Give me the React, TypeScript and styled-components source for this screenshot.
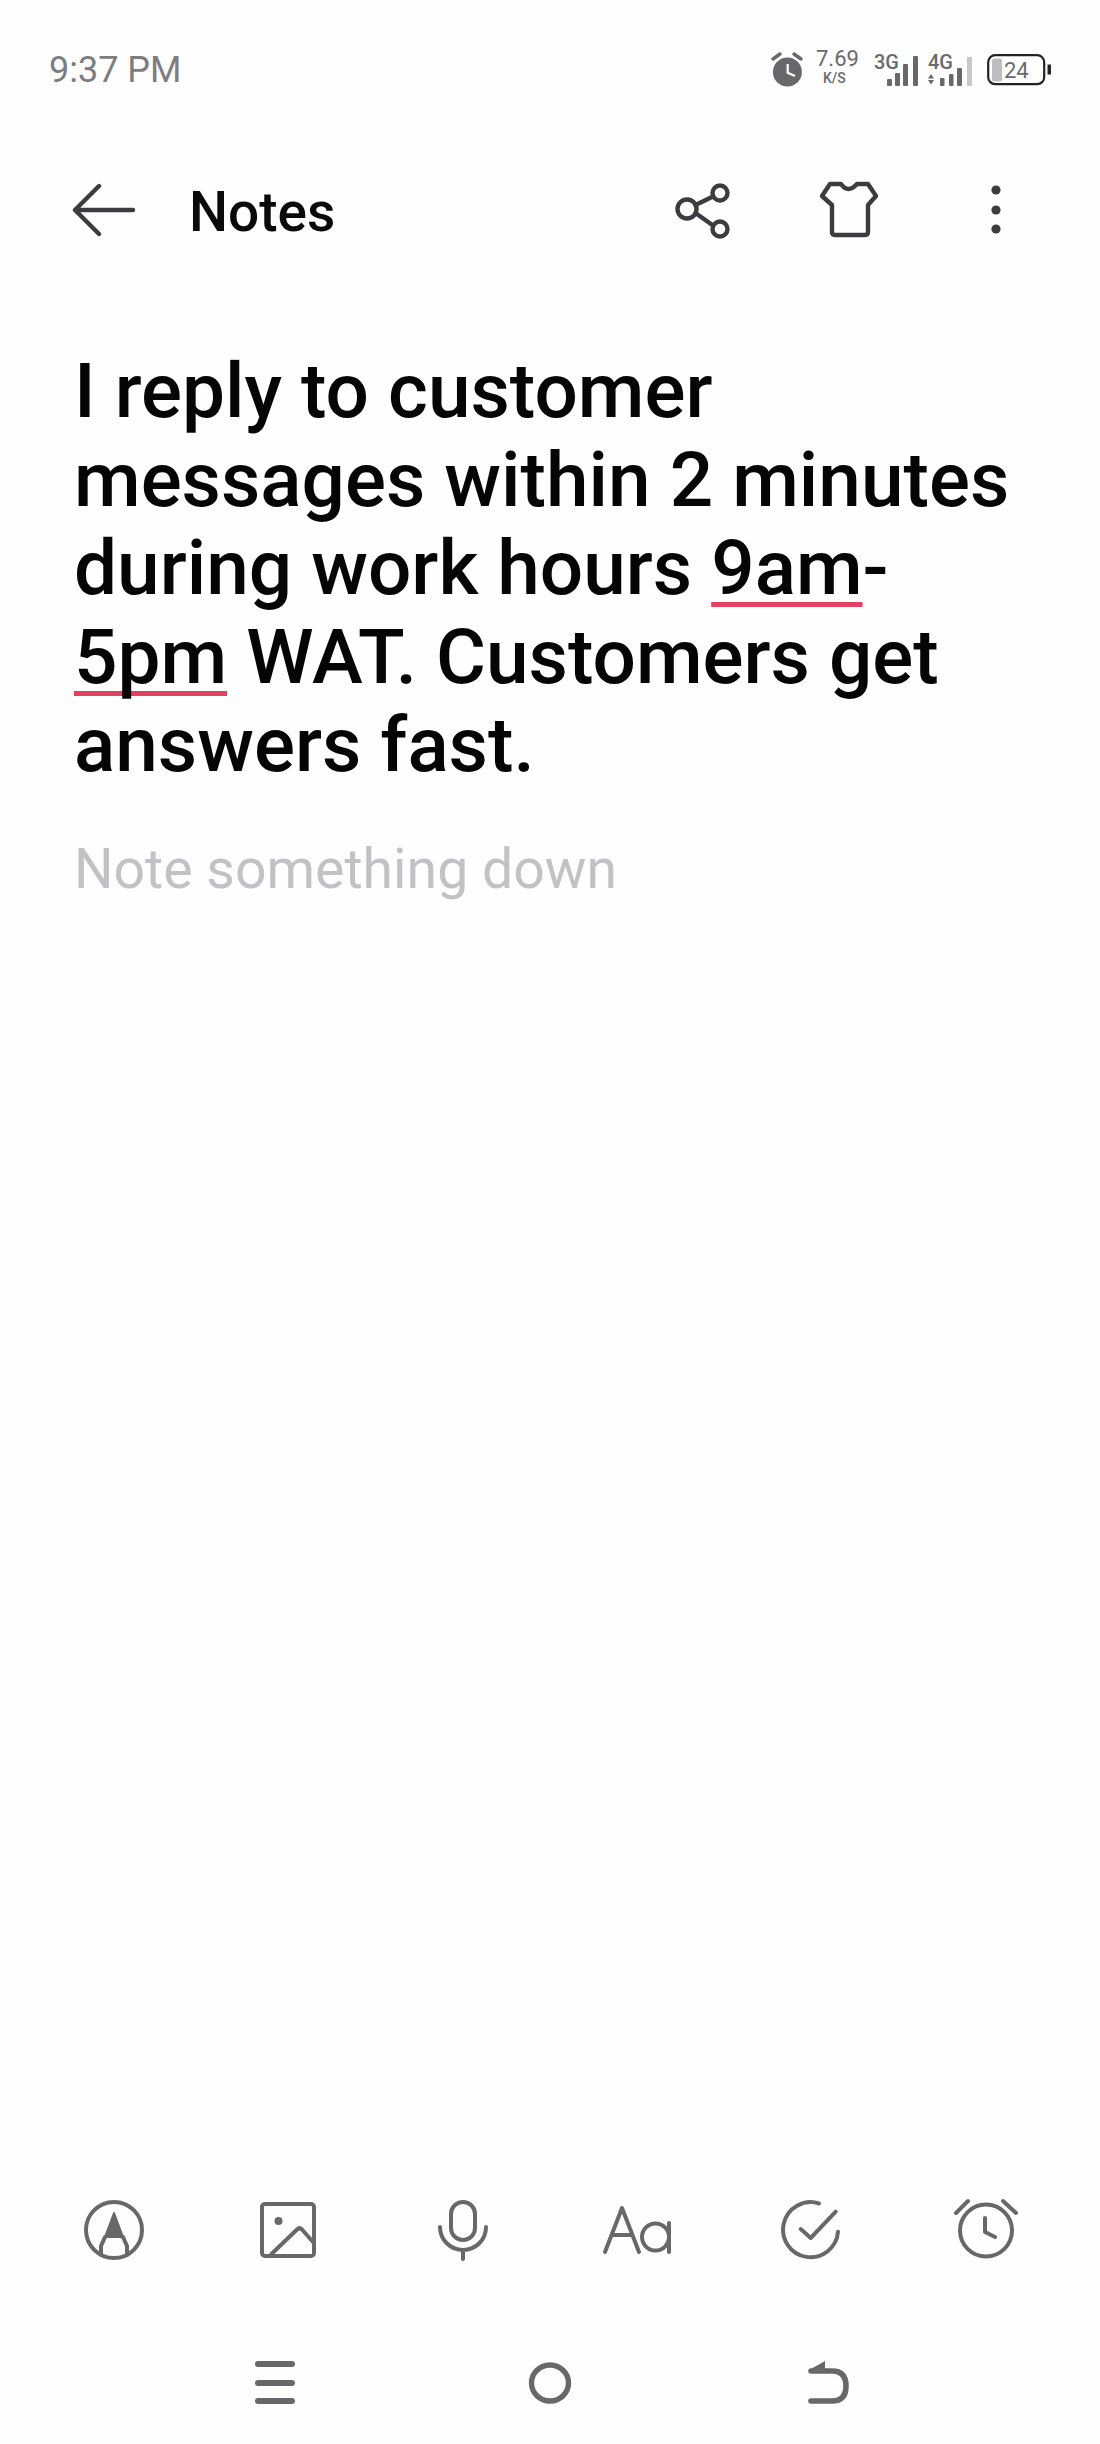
import React from "react";
import styled, { createGlobalStyle } from "styled-components";

const GlobalStyle = createGlobalStyle`
  html, body {
    margin: 0;
    padding: 0;
    background: #fffeff;
  }
  * {
    box-sizing: border-box;
  }
`;

const Screen = styled.div`
  width: 1100px;
  height: 2444px;
  display: flex;
  flex-direction: column;
  background: #fffeff;
  font-family: Roboto, "Liberation Sans", sans-serif;
  overflow: hidden;
`;

const StatusBar = styled.div`
  height: 100px;
  padding: 39px 48px 0 49px;
  display: flex;
  justify-content: space-between;
  align-items: center;
`;

const Clock = styled.div`
  font-size: 36px;
  color: #7d7d7f;
`;

const StatusIcons = styled.div`
  display: flex;
  align-items: center;
`;

const Header = styled.div`
  height: 116px;
  margin-top: 52px;
  display: flex;
  align-items: center;
`;

const BackButton = styled.div`
  width: 189px;
  padding-left: 71px;
  display: flex;
`;

const Title = styled.div`
  flex: 1;
  margin-top: 3px;
  font-size: 55px;
  font-weight: 500;
  color: #0a0a0a;
`;

const HeaderActions = styled.div`
  width: 470px;
  padding-right: 32px;
  display: grid;
  grid-template-columns: repeat(3, 146px);
  justify-items: center;
  align-items: center;
`;

const Editor = styled.div`
  flex: 1;
  padding: 0 70px 0 74px;
`;

const NoteText = styled.div`
  margin-top: 79px;
  font-size: 76.5px;
  line-height: 88.5px;
  font-weight: 500;
  color: #050505;
`;

const Misspelled = styled.span`
  text-decoration: underline #e4405f 5px;
  text-underline-offset: 8px;
  text-decoration-skip-ink: none;
`;

const Placeholder = styled.div`
  margin-top: 50px;
  font-size: 55.4px;
  line-height: 60px;
  color: #c2c2c6;
`;

const Toolbar = styled.div`
  padding: 0 27px;
  display: grid;
  grid-template-columns: repeat(6, 1fr);
  justify-items: center;
  align-items: center;
`;

const NavBar = styled.div`
  margin-top: 99px;
  height: 83px;
  padding: 0 137px;
  display: grid;
  grid-template-columns: repeat(3, 1fr);
  justify-items: center;
  align-items: flex-start;
`;

const Icon = styled.svg`
  display: block;
  flex: none;
`;

const Stroke = styled.g`
  fill: none;
  stroke: #68686a;
  stroke-width: 4;
  stroke-linecap: round;
  stroke-linejoin: round;
`;

const DarkStroke = styled(Stroke)`
  stroke: #3c3c40;
  stroke-width: 4.4;
`;

const TinyText = styled.text`
  font-family: Roboto, "Liberation Sans", sans-serif;
  fill: #6a6a6c;
`;

function StatusGlyphs() {
  return (
    <Icon width={217} height={50} viewBox="0 0 217 50">
      {/* alarm */}
      <g fill="#68686a">
        <circle cx="17.4" cy="27" r="14.5" />
      </g>
      <path d="M3 14 L10 9 M31 14 L24 9" fill="none" stroke="#68686a" strokeWidth="3.4" strokeLinecap="round" />
      <path d="M17.7 19 V27.7 L25 31" fill="none" stroke="#fff" strokeWidth="2.2" />
      {/* speed */}
      <TinyText x="46" y="21" fontSize="22">7.69</TinyText>
      <TinyText x="53" y="38" fontSize="14" fontWeight="500">K/S</TinyText>
      {/* 3G */}
      <TinyText x="104" y="24" fontSize="20" fontWeight="500">3G</TinyText>
      <g fill="#68686a">
        <rect x="117" y="34" width="5" height="7" rx="1" />
        <rect x="125" y="28" width="5" height="13" rx="1" />
        <rect x="133" y="19" width="5" height="22" rx="1" />
        <rect x="143" y="11" width="5" height="30" rx="1" />
      </g>
      {/* 4G */}
      <TinyText x="158" y="24" fontSize="20" fontWeight="500">4G</TinyText>
      <g fill="#68686a">
        <path d="M158 33.5 L161 29 L164 33.5 Z M158 35 L164 35 L161 39.5 Z" />
        <rect x="170" y="33" width="4.5" height="8" rx="1" />
        <rect x="179" y="29" width="4.5" height="12" rx="1" />
        <rect x="187" y="23" width="5" height="18" rx="1" />
      </g>
      <rect x="197" y="12" width="5" height="29" fill="#c8c8ca" />
    </Icon>
  );
}

function BatteryGlyph() {
  return (
    <Icon width={65} height={32} viewBox="0 0 65 32">
      <rect x="1.2" y="1.2" width="56" height="29" rx="7" fill="none" stroke="#232326" strokeWidth="2.2" />
      <rect x="5" y="4.5" width="10" height="23" rx="2" fill="#bdbdbf" />
      <TinyText x="17" y="24" fontSize="22">24</TinyText>
      <rect x="60.5" y="10.5" width="3.5" height="10" fill="#232326" />
    </Icon>
  );
}

function App() {
  return (
    <>
      <GlobalStyle />
      <Screen>
        <StatusBar>
          <Clock>9:37 PM</Clock>
          <StatusIcons>
            <StatusGlyphs />
            <BatteryGlyph />
          </StatusIcons>
        </StatusBar>

        <Header>
          <BackButton>
            <Icon width={66} height={54} viewBox="0 0 66 54">
              <DarkStroke>
                <path d="M4 27 H62 M28 3 L4 27 L28 51" />
              </DarkStroke>
            </Icon>
          </BackButton>
          <Title>Notes</Title>
          <HeaderActions>
            <Icon width={58} height={60} viewBox="0 0 58 60">
              <DarkStroke>
                <circle cx="13" cy="29" r="9.5" />
                <circle cx="46" cy="13" r="7.5" />
                <circle cx="46" cy="49" r="7.5" />
                <path d="M21.5 25 L39 16.5 M21.5 33 L39 45.5" />
              </DarkStroke>
            </Icon>
            <Icon width={60} height={60} viewBox="0 0 60 60">
              <DarkStroke>
                <path d="M13 25 V52 Q13 55 16 55 H46 Q49 55 49 52 V25 L57 16 L49 4 H38 Q29 14 22 4 H11 L3 16 Z" />
              </DarkStroke>
            </Icon>
            <Icon width={14} height={52} viewBox="0 0 12 52">
              <g fill="#3c3c40">
                <circle cx="7" cy="6" r="4.6" />
                <circle cx="7" cy="26" r="4.6" />
                <circle cx="7" cy="45" r="4.6" />
              </g>
            </Icon>
          </HeaderActions>
        </Header>

        <Editor>
          <NoteText>
            I reply to customer messages within 2 minutes during work hours{" "}
            <Misspelled>9am</Misspelled>-<wbr />
            <Misspelled>5pm</Misspelled> WAT. Customers get answers fast.
          </NoteText>
          <Placeholder>Note something down</Placeholder>
        </Editor>

        <Toolbar>
          <Icon width={62} height={62} viewBox="0 0 62 62">
            <Stroke>
              <circle cx="31" cy="31" r="28" />
              <path d="M22 38 L18 47 V56 M40 38 L44 47 V56" />
            </Stroke>
            <path d="M31 14 L22 38 H40 Z" fill="#68686a" stroke="#68686a" strokeWidth="2" strokeLinejoin="round" />
          </Icon>
          <Icon width={58} height={58} viewBox="0 0 58 58">
            <Stroke>
              <rect x="3" y="3" width="52" height="52" rx="3" />
              <path d="M12.5 53 L38 28.5 Q40.5 26 43 28.5 L54 41" />
            </Stroke>
            <circle cx="19.5" cy="20" r="4" fill="#68686a" />
          </Icon>
          <Icon width={50} height={64} viewBox="0 0 50 64">
            <Stroke>
              <rect x="13" y="4" width="24" height="38" rx="12" />
              <path d="M2 29 A23 23 0 0 0 48 29 M25 52 V61" />
            </Stroke>
          </Icon>
          <Icon width={70} height={50} viewBox="0 0 70 50">
            <Stroke>
              <path d="M3 47 L20 3 L37 47 M10 30 H30" />
              <circle cx="53.5" cy="32" r="13.5" />
              <path d="M67 18 V47" />
            </Stroke>
          </Icon>
          <Icon width={60} height={60} viewBox="0 0 60 60">
            <Stroke>
              <path d="M38 3.5 A27.5 27.5 0 1 0 57 31.7" />
              <path d="M19.7 29 L29.7 38 L54.7 11.7" />
            </Stroke>
          </Icon>
          <Icon width={66} height={64} viewBox="0 0 66 64">
            <Stroke>
              <circle cx="33" cy="32.5" r="26" />
              <path d="M32 20 V34 L42 39 M3 15 L15 3 M63 15 L50 3" />
            </Stroke>
          </Icon>
        </Toolbar>

        <NavBar>
          <Icon width={42} height={44} viewBox="0 0 42 44">
            <g fill="#68686a">
              <rect x="1" y="0" width="40" height="6" rx="3" />
              <rect x="1" y="19" width="40" height="6" rx="3" />
              <rect x="1" y="37" width="40" height="6" rx="3" />
            </g>
          </Icon>
          <Icon width={44} height={44} viewBox="0 0 44 44">
            <ellipse cx="22" cy="22" rx="18.5" ry="18" fill="none" stroke="#68686a" strokeWidth="5.4" />
          </Icon>
          <Icon width={50} height={44} viewBox="0 0 50 44">
            <path d="M11 10 H32 Q46 10 46 25 Q46 40 32 40 H11" fill="none" stroke="#68686a" strokeWidth="5.6" strokeLinecap="round" />
            <path d="M9 9 L25 0 V12 Z" fill="#68686a" />
          </Icon>
        </NavBar>
      </Screen>
    </>
  );
}

export default App;
